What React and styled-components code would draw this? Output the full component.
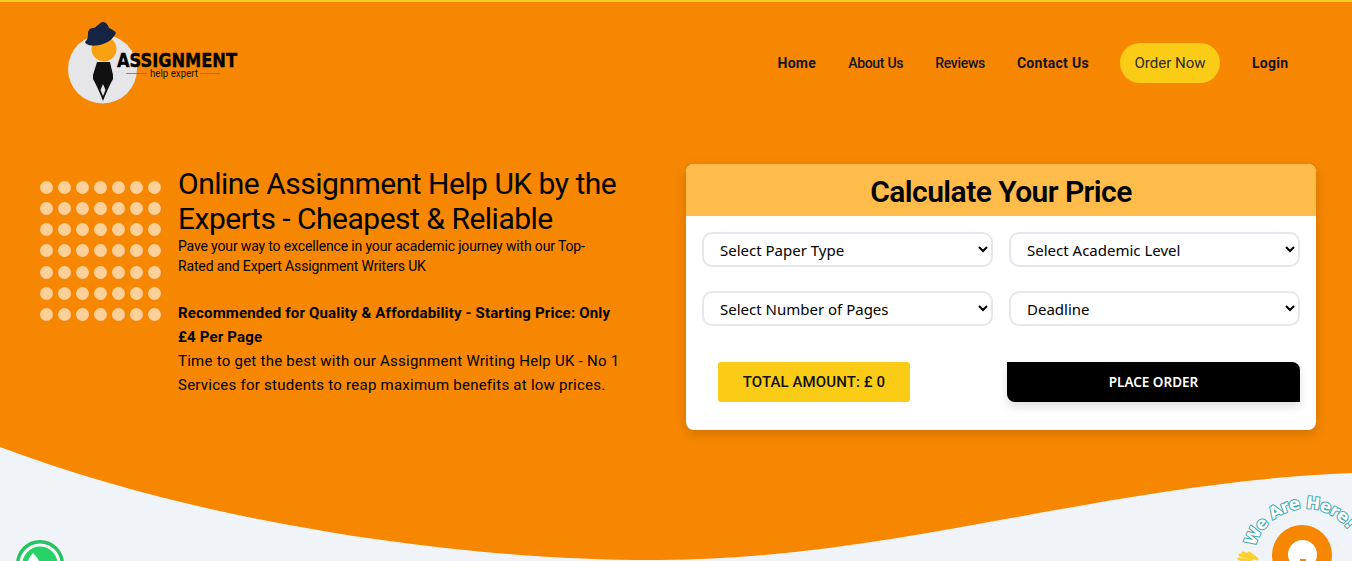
import React from 'react';
import styled, { createGlobalStyle } from 'styled-components';

const GlobalStyle = createGlobalStyle`
  html, body { margin: 0; padding: 0; }
  body { background: #f0f3f8; font-family: "Roboto", "Liberation Sans", sans-serif; overflow: hidden; }
  * { box-sizing: border-box; }
`;

const Page = styled.div`
  position: relative;
  height: 561px;
  overflow: hidden;
  border-top: 2px solid #facc15;
  background: #f78700;
`;

const Wave = styled.svg`
  position: absolute;
  left: 0;
  bottom: 0;
  width: 1352px;
  height: 120px;
`;

const Header = styled.header`
  position: relative;
  display: flex;
  justify-content: space-between;
  align-items: center;
  height: 121px;
  padding: 0 63.5px 0 68px;
`;

const Nav = styled.nav`
  display: flex;
  align-items: center;
  gap: 32px;
`;

const NavLink = styled.a`
  font-size: 14px;
  font-weight: ${(p) => (p.$strong ? 700 : 500)};
  color: #14141f;
  letter-spacing: ${(p) => (p.$strong ? '0.3px' : '-0.3px')};
`;

const OrderLink = styled.a`
  display: flex;
  align-items: center;
  justify-content: center;
  width: 100px;
  height: 40px;
  margin-left: -1px;
  border-radius: 20px;
  background: #facc15;
  font-size: 15px;
  color: #2b2b2b;
`;

const Hero = styled.main`
  position: relative;
  display: flex;
  justify-content: space-between;
  padding: 41px 36px 0 40px;
`;

const Intro = styled.section`
  display: flex;
  gap: 17px;
  width: 590px;
`;

const Dots = styled.div`
  display: grid;
  grid-template-columns: repeat(7, 13px);
  grid-auto-rows: 13px;
  column-gap: 5px;
  row-gap: 8.33px;
  margin-top: 16.5px;
  height: 142px;
`;

const Dot = styled.span`
  border-radius: 50%;
  background: #fdd09a;
`;

const Copy = styled.div`
  width: 445px;
  color: #000;
`;

const Title = styled.h1`
  margin: 2px 0 0;
  font-size: 30px;
  font-weight: 400;
  line-height: 35px;
  letter-spacing: -0.5px;
`;

const Lead = styled.p`
  max-width: 420px;
  margin: 0 0 25px;
  font-size: 14px;
  line-height: 20px;
  letter-spacing: -0.15px;
`;

const Recommend = styled.p`
  margin: 0;
  font-size: 15px;
  font-weight: 700;
  line-height: 24px;
  letter-spacing: 0.17px;
`;

const Body = styled.p`
  margin: 0;
  font-size: 15px;
  line-height: 24px;
  letter-spacing: 0.25px;
`;

const Card = styled.form`
  width: 630px;
  height: 266px;
  border-radius: 8px;
  background: #fff;
  box-shadow: 0 4px 12px rgba(0, 0, 0, 0.16);
  overflow: hidden;
`;

const CardTitle = styled.h2`
  margin: 0;
  height: 52px;
  background: #ffbc4a;
  color: #000;
  font-size: 30px;
  font-weight: 600;
  line-height: 55px;
  letter-spacing: -0.55px;
  text-align: center;
`;

const Fields = styled.div`
  display: grid;
  grid-template-columns: 291px 291px;
  grid-auto-rows: 35px;
  column-gap: 16px;
  row-gap: 24px;
  padding: 16px 16px 0;
`;

const Select = styled.select`
  width: 100%;
  height: 35px;
  padding-left: 12px;
  border: 2px solid #e6e6ee;
  border-radius: 10px;
  background: #fff;
  color: #000;
  font-family: "Noto Sans", sans-serif;
  font-size: 15px;
`;

const Actions = styled.div`
  display: flex;
  justify-content: space-between;
  padding: 36px 16px 0 32px;
`;

const Total = styled.div`
  display: flex;
  align-items: center;
  justify-content: center;
  width: 192px;
  height: 40px;
  border-radius: 3px;
  background: #facc15;
  color: #111;
  font-size: 15px;
  font-weight: 500;
  letter-spacing: 0.1px;
`;

const PlaceOrder = styled.button`
  width: 293px;
  height: 40px;
  border: 0;
  border-radius: 0 8px 0 8px;
  background: #000;
  box-shadow: 0 5px 10px rgba(0, 0, 0, 0.12);
  color: #fff;
  font-family: "Noto Sans", sans-serif;
  font-size: 13.5px;
  font-weight: 600;
`;

const WhatsApp = styled.svg`
  position: absolute;
  left: 16px;
  bottom: 0;
  width: 48px;
  height: 21px;
`;

const ChatWidget = styled.svg`
  position: absolute;
  right: 0;
  bottom: 0;
  width: 122px;
  height: 71px;
`;

const ArcLabel = styled.text`
  font-family: "DejaVu Sans", sans-serif;
  font-size: 16.5px;
  font-weight: 700;
  letter-spacing: -0.6px;
  fill: #fff;
  stroke: #3aa6b0;
  stroke-width: 2px;
  stroke-linejoin: round;
  paint-order: stroke fill;
`;

const Logo = () => (
  <svg width="172" height="85" viewBox="68 20 172 85">
    <circle cx="102.5" cy="69" r="34.5" fill="#e6e6e8" />
    <ellipse cx="104" cy="49" rx="12.5" ry="12.5" fill="#f9a111" />
    <path d="M85 42C87 40 88 38 88 34 88 30 90 28 93 28 97 28 99 22 103 22 106 22 108 25 109 28 111 29 114 30 116 33 114 37 110 42 103 44 97 46 87 47 85 42Z" fill="#152443" />
    <path d="M97 62H110L113 75V79Q108 88 103 101 98 88 93 79V75Z" fill="#111" />
    <path d="M103 84L100.5 90 103 96 105.5 90Z" fill="#e6e6e8" />
    <text x="117" y="67" fontFamily="'DejaVu Sans', sans-serif" fontSize="20" fontWeight="700" textLength="120" lengthAdjust="spacingAndGlyphs" fill="#000" stroke="#000" strokeWidth="0.4">ASSIGNMENT</text>
    <text x="150" y="77" fontFamily="'Roboto', sans-serif" fontSize="11" textLength="48" lengthAdjust="spacingAndGlyphs" fill="#111">help expert</text>
    <path d="M126 73.5H147M200 73.5H220" stroke="#8a6a30" strokeWidth="0.8" />
  </svg>
);

const paperRows = [
  ['Select Paper Type', 'Select Academic Level'],
  ['Select Number of Pages', 'Deadline'],
];

export default function App() {
  return (
    <>
      <GlobalStyle />
      <Page>
        <Wave viewBox="0 0 1352 120" preserveAspectRatio="none">
          <path d="M0 6 C 210 85 470 120 660 119 C 900 118 1100 42 1352 32 L1352 120 L0 120 Z" fill="#f0f3f8" />
        </Wave>

        <Header>
          <Logo />
          <Nav>
            <NavLink $strong>Home</NavLink>
            <NavLink>About Us</NavLink>
            <NavLink>Reviews</NavLink>
            <NavLink $strong>Contact Us</NavLink>
            <OrderLink>Order Now</OrderLink>
            <NavLink $strong>Login</NavLink>
          </Nav>
        </Header>

        <Hero>
          <Intro>
            <Dots>
              {Array.from({ length: 49 }, (_, i) => <Dot key={i} />)}
            </Dots>
            <Copy>
              <Title>Online Assignment Help UK by the Experts - Cheapest &amp; Reliable</Title>
              <Lead>Pave your way to excellence in your academic journey with our Top-Rated and Expert Assignment Writers UK</Lead>
              <Recommend>Recommended for Quality &amp; Affordability - Starting Price: Only £4 Per Page</Recommend>
              <Body>Time to get the best with our Assignment Writing Help UK - No 1 Services for students to reap maximum benefits at low prices.</Body>
            </Copy>
          </Intro>

          <Card>
            <CardTitle>Calculate Your Price</CardTitle>
            <Fields>
              {paperRows.flat().map((label) => (
                <Select key={label} defaultValue={label}>
                  <option>{label}</option>
                </Select>
              ))}
            </Fields>
            <Actions>
              <Total>TOTAL AMOUNT: £ 0</Total>
              <PlaceOrder type="button">PLACE ORDER</PlaceOrder>
            </Actions>
          </Card>
        </Hero>

        <WhatsApp viewBox="0 0 48 21">
          <circle cx="24" cy="24" r="24" fill="#25c460" />
          <circle cx="24" cy="24" r="19" fill="#25d366" stroke="#fff" strokeWidth="3" />
          <path d="M17 13C19 15 22 18 23 21H12C13 18 15 15 17 13Z" fill="#fff" />
        </WhatsApp>

        <ChatWidget viewBox="1230 490 122 71">
          <defs>
            <path id="arc" d="M1255 547A53 53 0 0 1 1357 547" fill="none" />
          </defs>
          <ArcLabel>
            <textPath href="#arc">We Are Here!</textPath>
          </ArcLabel>
          <g stroke="#fbd02c" strokeWidth="3" strokeLinecap="round">
            <path d="M1240 555L1252 559" />
            <path d="M1243 553L1255 558" />
            <path d="M1249 553L1257 559" />
            <path d="M1239 559L1250 561" />
          </g>
          <circle cx="1302" cy="555" r="30" fill="#f78700" />
          <circle cx="1302.5" cy="554.5" r="14.5" fill="#fff" />
          <rect x="1300" y="559" width="6" height="2" fill="#f78700" />
        </ChatWidget>
      </Page>
    </>
  );
}
